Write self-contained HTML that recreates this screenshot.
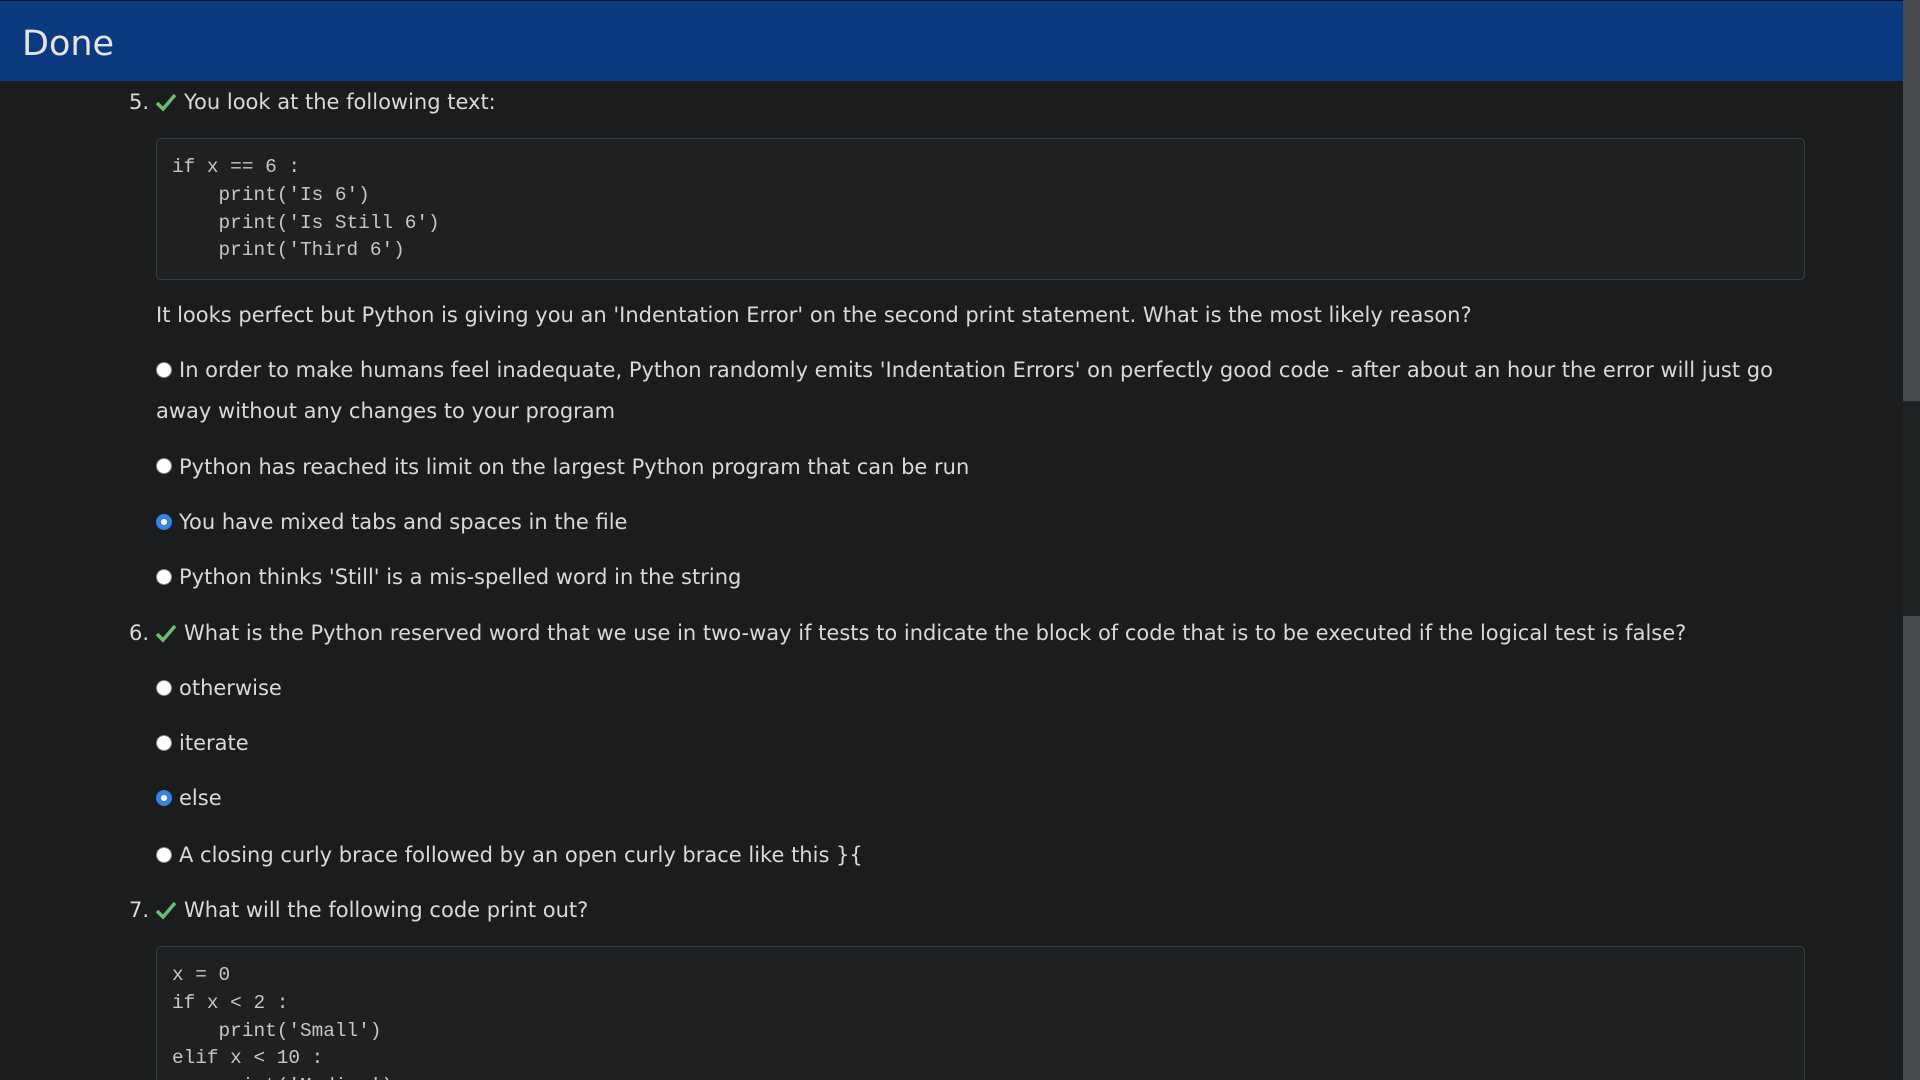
<!DOCTYPE html>
<html><head><meta charset="utf-8"><style>
html,body{margin:0;padding:0;width:1920px;height:1080px;overflow:hidden;background:#1b1c1e;}
body{font-family:"DejaVu Sans","Liberation Sans",sans-serif;color:#dcd9d3;position:relative;}
.hdr{position:absolute;left:0;top:0;width:1903px;height:81px;background:#0b3a80;border-top:1px solid #0a0f1a;box-sizing:border-box;}
.hdr span{position:absolute;left:22px;top:23px;font-size:35px;color:#e6e4e0;line-height:40px;}
.sb{position:absolute;left:1903px;top:0;width:17px;height:1080px;background:#464b4d;}
.sb i{position:absolute;left:0;top:401px;width:17px;height:215px;background:#202324;}
.l{position:absolute;font-size:21px;line-height:28px;white-space:nowrap;}
.num{position:absolute;font-size:21px;line-height:28px;}
.ck{position:absolute;width:22px;height:20px;}
.r{position:absolute;width:16px;height:16px;border-radius:50%;background:#fff;box-sizing:border-box;border:1px solid #888;}
.r.s{background:#fff;border:5px solid #3b82e0;}
.code{position:absolute;left:156px;width:1649px;background:#1f2022;border:1px solid #3a3d40;border-radius:5px;box-sizing:border-box;}
.code pre{margin:0;position:absolute;left:15px;font-family:"Liberation Mono",monospace;font-size:19.4px;line-height:27.8px;color:#c9c5bf;}
</style></head><body>
<div class="hdr"><span>Done</span></div>
<div class="sb"><i></i></div>

<div class="num" style="left:129px;top:88px">5.</div>
<svg class="ck" style="left:155px;top:92px" viewBox="0 0 22 20"><path d="M2 11 L8 17 L20 3" stroke="#6dbb73" stroke-width="3.5" fill="none"/></svg>
<div class="l" style="left:184px;top:88px">You look at the following text:</div>

<div class="code" style="top:138px;height:142px"><pre style="top:15px">if x == 6 :
    print('Is 6')
    print('Is Still 6')
    print('Third 6')</pre></div>

<div class="l" style="left:156px;top:301px">It looks perfect but Python is giving you an 'Indentation Error' on the second print statement. What is the most likely reason?</div>

<div class="r" style="left:156px;top:362px"></div>
<div class="l" style="left:179px;top:356px">In order to make humans feel inadequate, Python randomly emits 'Indentation Errors' on perfectly good code - after about an hour the error will just go</div>
<div class="l" style="left:156px;top:397px">away without any changes to your program</div>

<div class="r" style="left:156px;top:458px"></div>
<div class="l" style="left:179px;top:453px">Python has reached its limit on the largest Python program that can be run</div>
<div class="r s" style="left:156px;top:514px"></div>
<div class="l" style="left:179px;top:508px">You have mixed tabs and spaces in the file</div>
<div class="r" style="left:156px;top:569px"></div>
<div class="l" style="left:179px;top:563px">Python thinks 'Still' is a mis-spelled word in the string</div>

<div class="num" style="left:129px;top:619px">6.</div>
<svg class="ck" style="left:155px;top:623px" viewBox="0 0 22 20"><path d="M2 11 L8 17 L20 3" stroke="#6dbb73" stroke-width="3.5" fill="none"/></svg>
<div class="l" style="left:184px;top:619px">What is the Python reserved word that we use in two-way if tests to indicate the block of code that is to be executed if the logical test is false?</div>

<div class="r" style="left:156px;top:680px"></div>
<div class="l" style="left:179px;top:674px">otherwise</div>
<div class="r" style="left:156px;top:735px"></div>
<div class="l" style="left:179px;top:729px">iterate</div>
<div class="r s" style="left:156px;top:790px"></div>
<div class="l" style="left:179px;top:784px">else</div>
<div class="r" style="left:156px;top:847px"></div>
<div class="l" style="left:179px;top:841px">A closing curly brace followed by an open curly brace like this }{</div>

<div class="num" style="left:129px;top:896px">7.</div>
<svg class="ck" style="left:155px;top:900px" viewBox="0 0 22 20"><path d="M2 11 L8 17 L20 3" stroke="#6dbb73" stroke-width="3.5" fill="none"/></svg>
<div class="l" style="left:184px;top:896px">What will the following code print out?</div>

<div class="code" style="top:946px;height:160px"><pre style="top:15px">x = 0
if x &lt; 2 :
    print('Small')
elif x &lt; 10 :
    print('Medium')</pre></div>
</body></html>
